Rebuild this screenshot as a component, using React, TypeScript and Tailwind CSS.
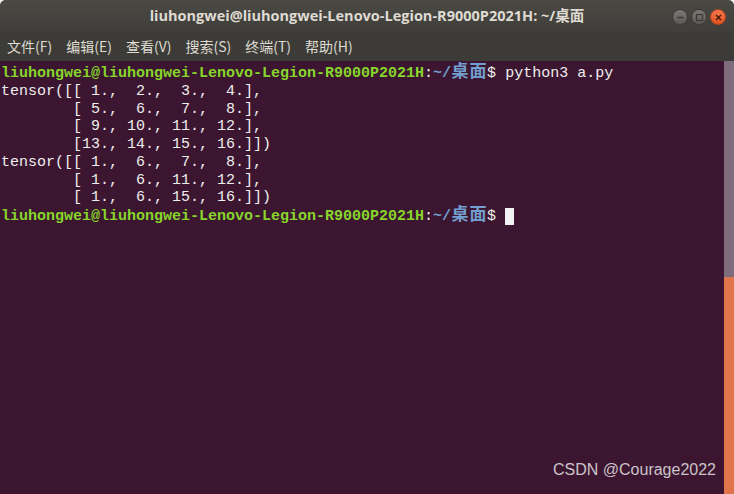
import React from "react";

const menus = ["文件(F)", "编辑(E)", "查看(V)", "搜索(S)", "终端(T)", "帮助(H)"];

const mono = "font-['Liberation_Mono','DejaVu_Sans_Mono','Noto_Sans_CJK_SC',monospace]";

// CJK glyphs take two terminal cells
const Wide = ({ ch }: { ch: string }) => (
  <span className="inline-block w-[18px] text-center text-[17px] leading-[17px]">{ch}</span>
);

const Prompt = ({ cmd, cursor }: { cmd?: string; cursor?: boolean }) => (
  <div className="flex items-center whitespace-pre">
    <span className="font-bold text-[#87d52a]">liuhongwei@liuhongwei-Lenovo-Legion-R9000P2021H</span>
    <span className="text-[#eeeeec]">:</span>
    <span className="font-bold text-[#729fcf]">
      ~/<Wide ch="桌" />
      <Wide ch="面" />
    </span>
    <span className="text-[#eeeeec]">$ {cmd}</span>
    {cursor && <span className="inline-block w-[9px] h-[17px] bg-[#f2f2f2]" />}
  </div>
);

const lines = [
  "tensor([[ 1.,  2.,  3.,  4.],",
  "        [ 5.,  6.,  7.,  8.],",
  "        [ 9., 10., 11., 12.],",
  "        [13., 14., 15., 16.]])",
  "tensor([[ 1.,  6.,  7.,  8.],",
  "        [ 1.,  6., 11., 12.],",
  "        [ 1.,  6., 15., 16.]])",
];

const WinButton = ({ kind }: { kind: "min" | "max" | "close" }) => {
  const close = kind === "close";
  return (
    <div
      className={`w-[16px] h-[16px] rounded-full flex items-center justify-center border ${
        close
          ? "bg-gradient-to-b from-[#f4774b] to-[#e0501c] border-[#b9461d]"
          : "bg-gradient-to-b from-[#7a7975] to-[#5b5a56] border-[#3a3935]"
      }`}
    >
      <svg width="9" height="9" viewBox="0 0 9 9">
        {kind === "min" && <line x1="1.5" y1="4.5" x2="7.5" y2="4.5" stroke="#3a3935" strokeWidth="1.3" />}
        {kind === "max" && <rect x="1.5" y="1.5" width="6" height="6" fill="none" stroke="#3a3935" strokeWidth="1.2" />}
        {close && (
          <g stroke="#3a1608" strokeWidth="1.3">
            <line x1="2" y1="2" x2="7" y2="7" />
            <line x1="7" y1="2" x2="2" y2="7" />
          </g>
        )}
      </svg>
    </div>
  );
};

export default function App() {
  return (
    <div className="w-[734px] h-[494px] bg-[#f0efed] overflow-hidden">
      <div className="relative w-full h-full flex flex-col rounded-t-[6px] overflow-hidden bg-[#3c3b37]">
        {/* title bar */}
        <div className="h-[32px] flex items-center justify-center bg-gradient-to-b from-[#4a4944] to-[#3f3e3a] relative">
          <span className="font-['Open_Sans','Noto_Sans_CJK_SC',sans-serif] text-[14.5px] font-bold text-[#dfdbd2]">
            liuhongwei@liuhongwei-Lenovo-Legion-R9000P2021H: ~/桌面
          </span>
          <div className="absolute right-[8px] top-[9px] flex gap-[3px]">
            <WinButton kind="min" />
            <WinButton kind="max" />
            <WinButton kind="close" />
          </div>
        </div>
        {/* menu bar */}
        <div className="h-[29px] flex items-center gap-[14px] pl-[7px] bg-[#3c3b37] font-['Noto_Sans_CJK_SC',sans-serif] text-[14px] text-[#dfdbd2]">
          {menus.map((m) => (
            <span key={m}>{m}</span>
          ))}
        </div>
        {/* terminal */}
        <div className="flex-1 flex bg-[#3c1631]">
          <div className={`flex-1 pt-[3px] pl-[1px] ${mono} text-[15px] leading-[17.75px] text-[#eeeeec]`}>
            <Prompt cmd="python3 a.py" />
            {lines.map((l, i) => (
              <div key={i} className="whitespace-pre">
                {l}
              </div>
            ))}
            <Prompt cursor />
          </div>
          <div className="w-[10px] flex flex-col">
            <div className="h-[216px] bg-[#7e6b7c]" />
            <div className="flex-1 bg-[#e0744a]" />
          </div>
        </div>
        <div className="absolute right-[18px] bottom-[12px] font-['Liberation_Sans',sans-serif] text-[16px] text-[#cbc3c9]">
          CSDN @Courage2022
        </div>
      </div>
    </div>
  );
}
